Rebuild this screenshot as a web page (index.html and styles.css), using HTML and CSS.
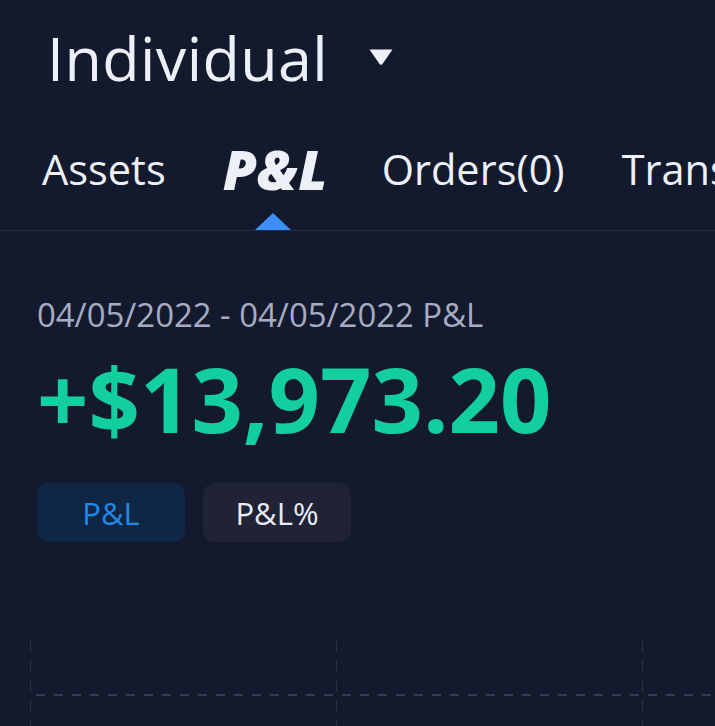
FILE: index.html
```html
<!DOCTYPE html>
<html>
<head>
<meta charset="utf-8">
<link rel="stylesheet" href="styles.css">
</head>
<body>
<div class="page">
  <header class="account">
    <span class="account-name">Individual</span>
    <svg class="caret" width="26" height="20" viewBox="0 0 26 20"><path d="M1.5 2.5 H24.5 L14.6 16.8 Q13 19 11.4 16.8 Z" fill="#eef0f7"/></svg>
  </header>
  <nav class="tabs">
    <span class="tab">Assets</span>
    <span class="tab active">P&amp;L</span>
    <span class="tab">Orders(0)</span>
    <span class="tab">Transactions</span>
  </nav>
  <section class="summary">
    <div class="range">04/05/2022 - 04/05/2022 P&amp;L</div>
    <div class="amount">+$13,973.20</div>
    <div class="toggles">
      <button class="toggle selected">P&amp;L</button>
      <button class="toggle">P&amp;L%</button>
    </div>
  </section>
  <div class="chart">
    <div class="vline v1"></div>
    <div class="vline v2"></div>
    <div class="vline v3"></div>
    <div class="hline"></div>
  </div>
</div>
</body>
</html>
```
FILE: styles.css
```css
html, body {
  margin: 0;
  padding: 0;
  background: #141a2e;
  overflow: hidden;
}
.page {
  width: 715px;
  height: 726px;
  overflow: hidden;
  font-family: "Open Sans", "Noto Sans", sans-serif;
  color: #eef0f7;
}
.account {
  display: flex;
  padding: 23px 0 0 47px;
  height: 100px;
  box-sizing: border-box;
  align-items: flex-start;
}
.account-name {
  font-size: 61px;
  line-height: 70px;
  font-weight: 500;
  letter-spacing: 0.4px;
}
.caret {
  margin-left: 40px;
  margin-top: 24px;
}
.tabs {
  display: flex;
  white-space: nowrap;
  padding: 41px 0 0 42px;
  height: 131px;
  box-sizing: border-box;
  border-bottom: 1px solid #262d43;
  overflow: hidden;
}
.tab {
  font-size: 41.5px;
  line-height: 56px;
  margin-right: 57px;
  position: relative;
}
.tab.active {
  font-weight: 800;
  font-style: italic;
  font-size: 55px;
  line-height: 56px;
  margin-right: 54px;
  letter-spacing: 0.5px;
}
.tab.active::after {
  content: "";
  position: absolute;
  left: 50%;
  bottom: 0;
  margin-left: -20px;
  border-left: 18px solid transparent;
  border-right: 18px solid transparent;
  border-bottom: 17px solid #3d8ef5;
}
.summary {
  padding: 64px 0 0 37px;
}
.range {
  font-size: 32.9px;
  color: #a7acc2;
  line-height: 40px;
}
.amount {
  font-size: 90px;
  font-weight: 700;
  color: #13cfa0;
  line-height: 100px;
  margin-top: 13px;
  letter-spacing: 0px;
}
.toggles {
  display: flex;
  gap: 18px;
  margin-top: 35px;
}
.toggle {
  width: 148px;
  height: 59px;
  border: none;
  border-radius: 12px;
  font-family: "Open Sans", "Noto Sans", sans-serif;
  font-size: 31px;
  background: #1f2335;
  color: #e9ebf3;
  padding: 0;
}
.toggle.selected {
  background: #0f2644;
  color: #1f8ae8;
}
.chart {
  position: relative;
  height: 86px;
  margin-top: 98px;
}
.vline {
  position: absolute;
  top: 0;
  bottom: 0;
  width: 1px;
  background: repeating-linear-gradient(to bottom, #2a3147 0 12px, transparent 12px 20px);
}
.v1 { left: 30px; }
.v2 { left: 336px; }
.v3 { left: 642px; }
.hline {
  position: absolute;
  left: 36px;
  right: 0;
  top: 54px;
  height: 2px;
  background: repeating-linear-gradient(to right, #343b52 0 9px, transparent 9px 18px);
}
```
